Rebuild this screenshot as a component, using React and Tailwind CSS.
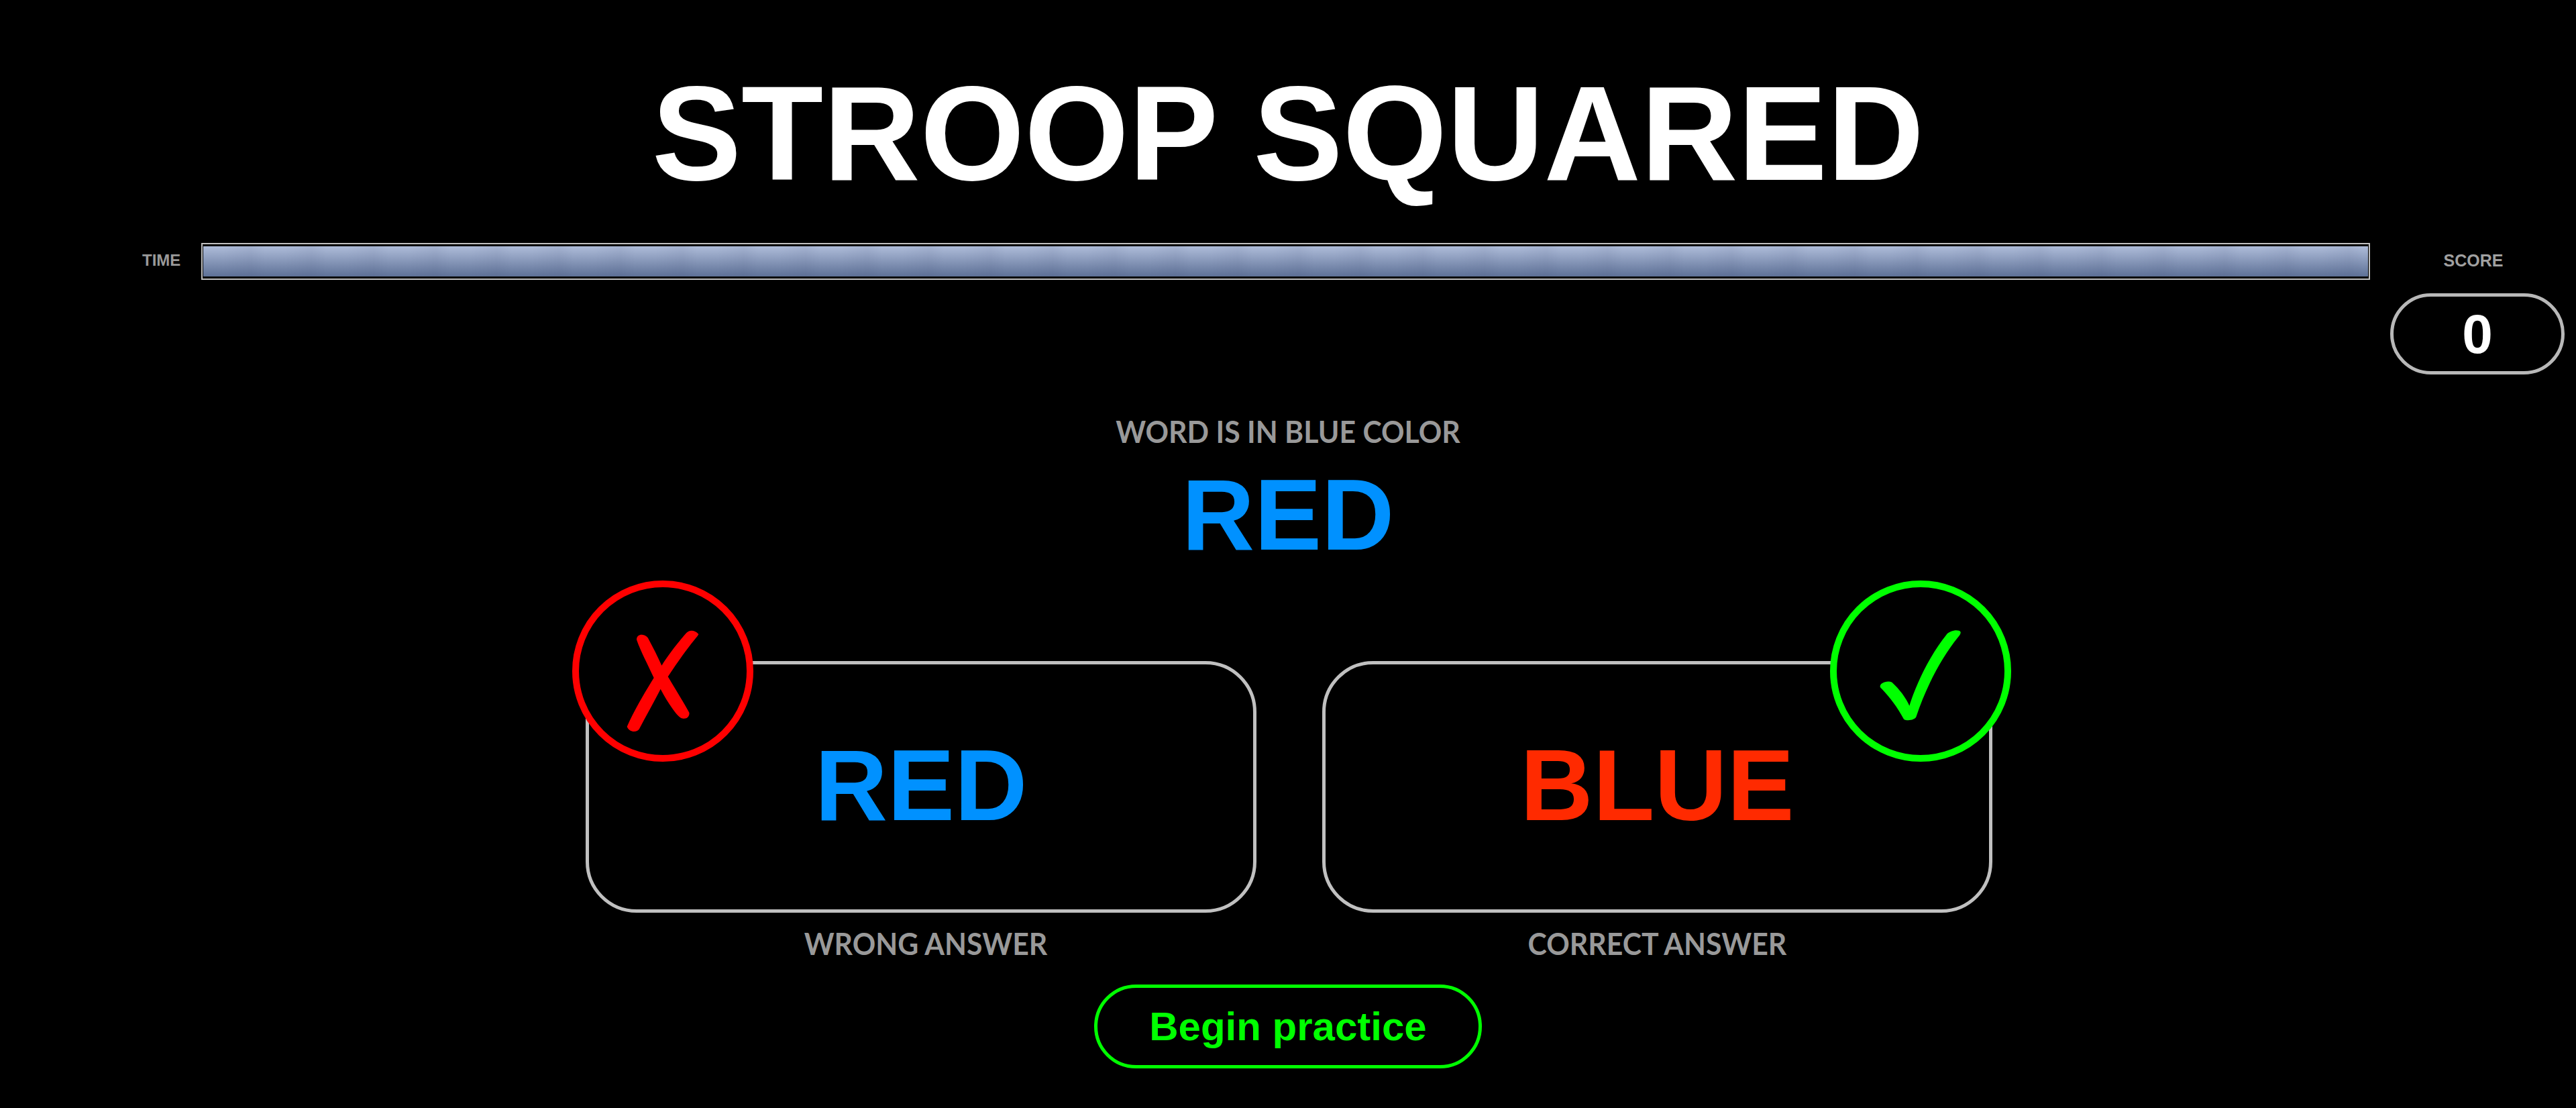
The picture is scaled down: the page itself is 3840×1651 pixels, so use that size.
import React from 'react';

const arial = "font-['Liberation_Sans',Arial,sans-serif]";
const caption = "font-['Lato','Open_Sans',sans-serif] font-bold text-[#999999] text-[46px] leading-none scale-x-[0.93] whitespace-nowrap";

const Wrong = () => (
  <svg viewBox="0 0 270 270" className="absolute left-[-25px] top-[-125px] w-[270px] h-[270px]">
    <circle cx="135" cy="135" r="130" fill="#000" stroke="#ff0000" strokeWidth="10" />
    <g transform="translate(-23.3 -25) scale(0.3333)">
      <path d="M358 340 C358 322 372 316 385 318 C398 320 408 328 412 338 C432 375 452 415 470 455 C495 415 540 355 580 310 C590 298 615 292 635 315 C630 325 625 330 618 338 C575 390 535 450 498 505 C528 555 562 610 593 665 C596 680 585 695 565 692 C550 690 535 670 520 650 C500 622 480 590 465 560 C440 610 400 680 370 738 C360 755 325 755 315 728 C350 650 395 575 435 510 C410 455 375 390 358 340 Z" fill="#ff0000" />
    </g>
  </svg>
);

const Right = () => (
  <svg viewBox="0 0 270 270" className="absolute right-[-33px] top-[-125px] w-[270px] h-[270px]">
    <circle cx="135" cy="135" r="130" fill="#000" stroke="#00ff00" strokeWidth="10" />
    <g transform="translate(-38.3 -25) scale(0.3333)">
      <path d="M340 543 C345 530 375 522 392 530 C425 560 455 600 470 635 C495 550 560 410 635 318 C650 298 690 292 699 305 C700 312 695 320 688 328 C610 425 545 550 500 685 C495 698 460 705 445 695 C415 640 385 600 345 558 C338 552 338 548 340 543 Z" fill="#00ff00" />
    </g>
  </svg>
);

const App = () => {
  return (
    <div className={`w-full h-[1651px] bg-black overflow-hidden flex flex-col ${arial}`}>
      <h1 className="text-[200px] font-bold text-white text-center leading-none mt-[99px]">STROOP SQUARED</h1>

      {/* Timer row + score */}
      <div className="flex items-start mt-[63px] ml-[212px]">
        <span className="w-[88px] text-[24px] font-bold text-[#999999] leading-[52px]">TIME</span>
        <div className="w-[3233px] h-[55px] border-2 border-[#c0c0c0] py-[3px] px-px">
          <div className="h-full bg-[repeating-linear-gradient(90deg,rgba(60,70,110,0)_0px,rgba(60,70,110,0)_30px,rgba(60,70,110,0.07)_70px,rgba(60,70,110,0)_92px),linear-gradient(180deg,#aebcd9,#5e7197)]" />
        </div>
        <div className="ml-[30px] w-[260px] flex flex-col items-center">
          <span className="text-[25px] font-bold text-[#a0a0a0] leading-[52px] mr-[12px]">SCORE</span>
          <div className="w-[260px] h-[121px] mt-[23px] rounded-full border-[5px] border-[#b8b8b8] flex items-center justify-center text-[82px] font-bold text-white">0</div>
        </div>
      </div>

      <div className={`${caption} text-center mt-[62px]`}>WORD IS IN BLUE COLOR</div>
      <div className="text-[150px] font-bold text-[#0091ff] text-center leading-none mt-[26px]">RED</div>

      {/* Answer cards */}
      <div className="flex justify-center gap-[98px] mt-[143px] ml-[3px]">
        <div className="flex flex-col items-center">
          <div className="relative w-[1000px] h-[375px] pb-[4px] rounded-[76px] border-[5px] border-[#c0c0c0] flex items-center justify-center text-[150px] font-bold text-[#0091ff]">
            <Wrong />
            RED
          </div>
          <span className={`${caption} mt-[23px] ml-[14px]`}>WRONG ANSWER</span>
        </div>
        <div className="flex flex-col items-center">
          <div className="relative w-[999px] h-[375px] pb-[4px] rounded-[76px] border-[5px] border-[#c0c0c0] flex items-center justify-center text-[150px] font-bold text-[#ff2a00]">
            <Right />
            BLUE
          </div>
          <span className={`${caption} mt-[23px]`}>CORRECT ANSWER</span>
        </div>
      </div>

      <button className="self-center mt-[38px] w-[578px] h-[125px] rounded-full border-[5px] border-[#00ff00] flex items-center justify-center">
        <span className="text-[60px] font-bold text-[#00ff00] whitespace-nowrap">Begin practice</span>
      </button>
    </div>
  );
};

export default App;
